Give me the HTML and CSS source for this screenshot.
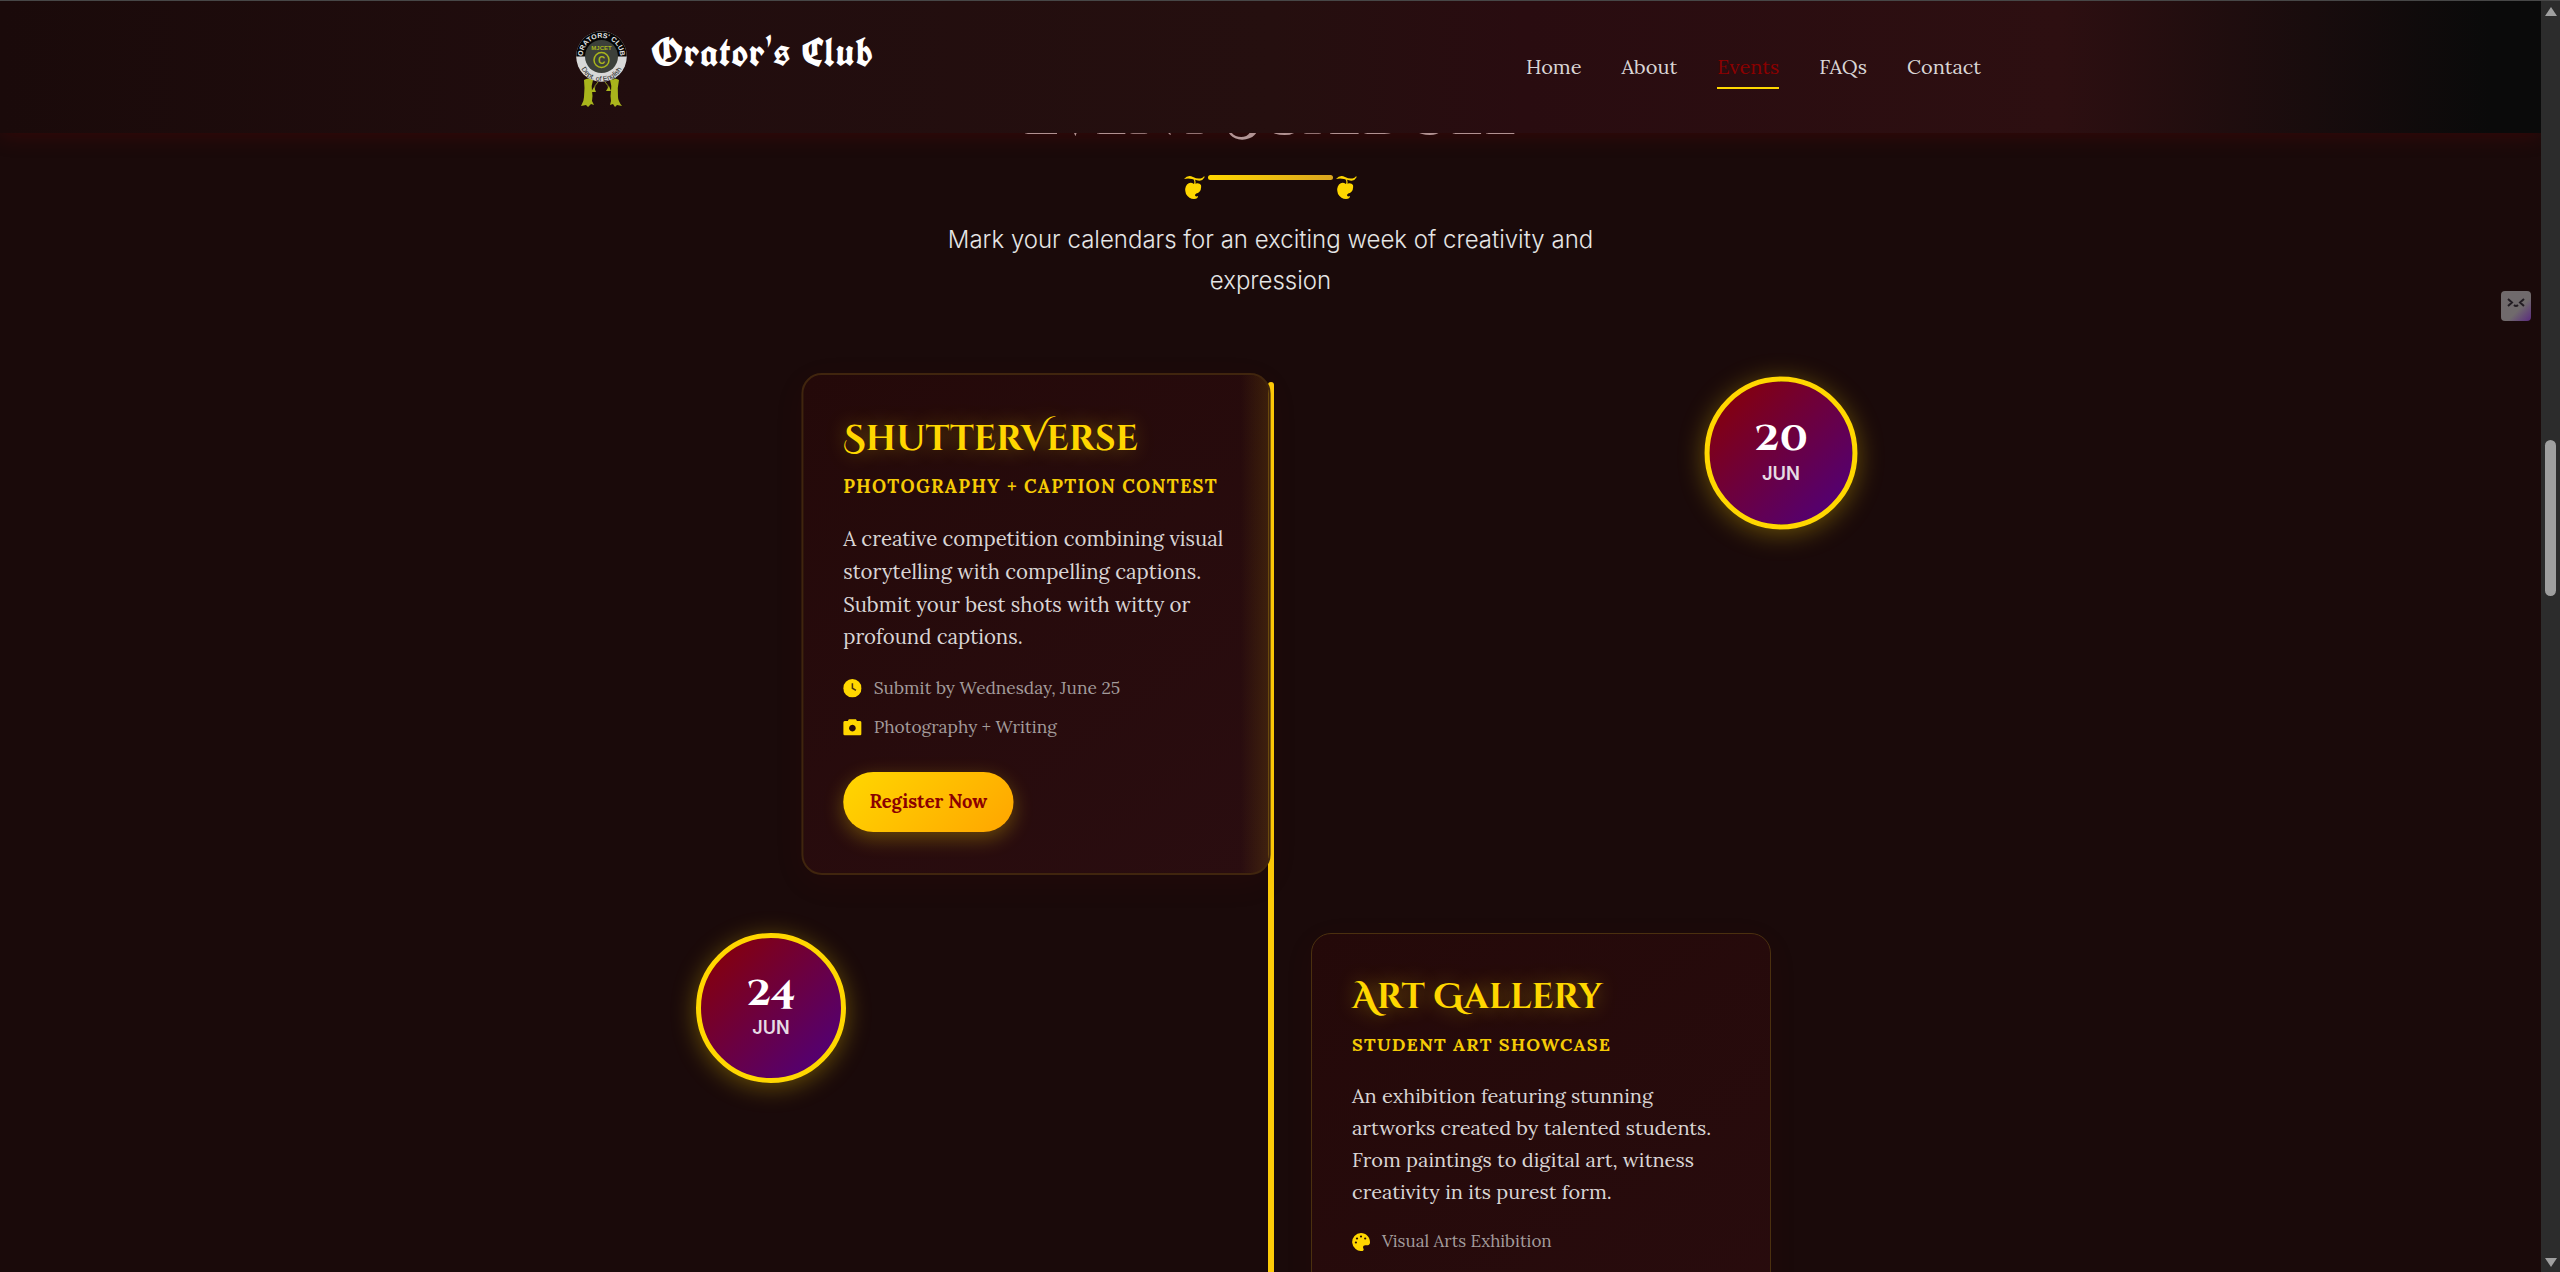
FILE: index.html
```html
<!DOCTYPE html>
<html lang="en">
<head>
<meta charset="utf-8">
<title>Orator's Club</title>
<link rel="stylesheet" href="styles.css">
</head>
<body>
<div class="page">
  <header class="header">
    <div class="brand">
      <svg class="logo" viewBox="0 0 51 76">
        <defs>
          <path id="arcTop" d="M6.800 25.500a18.700 18.700 0 0 1 37.400 0"/>
          <path id="arcBottom" d="M2.800 27.500a22.700 22.700 0 0 0 45.400 0"/>
        </defs>
        <path d="M8 49q4-3 9 0-2 6-1 11t0 10l2 4-3-1-3 3-2-2-5 1q3-5 3-9 1-9 0-17zM43 49q-4-3-9 0 2 6 1 11t0 10l-1 4 3-1 2 3 2-2 5 1q-4-5-4-9-1-9 1-17z" fill="#a9b51c"/>
        <path d="M22 51q-4 3-4 9M29 51q4 3 4 9" stroke="#8a9420" fill="none"/>
        <path d="M18 56l2 5h-5zM33 55l2 5h-5z" fill="#a9b51c"/>
        <circle cx="25.500" cy="25.500" r="25.300" fill="#d8d8d8"/>
        <path d="M.2 25.500a25.300 25.300 0 0 1 50.600 0z" fill="#050505"/>
        <circle cx="25.500" cy="25.500" r="16.500" fill="#3c403a"/>
        <circle cx="25.500" cy="29" r="7.500" fill="none" stroke="#a9b51c" stroke-width="1.500"/>
        <text x="25.500" y="32.700" class="logo-c">C</text>
        <text x="25.500" y="18.500" class="logo-mid">MJCET</text>
        <text class="logo-top"><textPath href="#arcTop" startOffset="50%">ORATORS' CLUB</textPath></text>
        <text class="logo-bottom"><textPath href="#arcBottom" startOffset="50%">Dept. of English</textPath></text>
      </svg>
      <span class="brand-name">Orator's Club</span>
    </div>
    <nav class="nav">
      <a class="nav-link">Home</a>
      <a class="nav-link">About</a>
      <a class="nav-link active">Events</a>
      <a class="nav-link">FAQs</a>
      <a class="nav-link">Contact</a>
    </nav>
  </header>

  <main class="main">
    <h1 class="heading">Event Schedule</h1>
    <div class="ornament">
      <svg class="leaf" viewBox="0 0 21 24"><path d="M0 4Q4-.5 9 2t9 1q2-1 2-2 1 1 0 2-2 4-8 2Q5 2.500 0 4z"/><path d="M10 4q2 3 0 7" class="stem"/><path d="M10 9Q6 6.500 3 9.500 0 13 2 19q3 5 8 5 4 0 4-3-2 1-3-.5 0-2 3-2.500 4-3 3-8Q15 7 10 9z"/></svg>
      <i class="rule"></i>
      <svg class="leaf" viewBox="0 0 21 24"><path d="M0 4Q4-.5 9 2t9 1q2-1 2-2 1 1 0 2-2 4-8 2Q5 2.500 0 4z"/><path d="M10 4q2 3 0 7" class="stem"/><path d="M10 9Q6 6.500 3 9.500 0 13 2 19q3 5 8 5 4 0 4-3-2 1-3-.5 0-2 3-2.500 4-3 3-8Q15 7 10 9z"/></svg>
    </div>
    <p class="lead">Mark your calendars for an exciting week of creativity and<br>expression</p>

    <section class="timeline">
      <div class="line"></div>
      <div class="row row-first">
        <article class="card hovered">
          <h2 class="title">ShutterVerse</h2>
          <h3 class="kind">PHOTOGRAPHY + CAPTION CONTEST</h3>
          <p class="text">A creative competition combining visual<br>storytelling with compelling captions.<br>Submit your best shots with witty or<br>profound captions.</p>
          <ul class="meta">
            <li><svg viewBox="0 0 18 18"><circle cx="9" cy="9" r="9"/><path d="M9 4v5l3.500 2" class="hands"/></svg><span>Submit by Wednesday, June 25</span></li>
            <li><svg viewBox="0 0 18 18"><path fill-rule="evenodd" d="M1.500 3H4.500L5.500 1.500h7l1 1.500h3Q18 3 18 4.500V15.500Q18 17 16.500 17h-15Q0 17 0 15.500V4.500Q0 3 1.500 3zM9 6.800a3.300 3.300 0 1 0 .01 0z"/></svg><span>Photography + Writing</span></li>
          </ul>
          <a class="button">Register Now</a>
        </article>
        <div class="date zoomed"><b>20</b><span>JUN</span></div>
      </div>
      <div class="row row-second">
        <div class="date"><b>24</b><span>JUN</span></div>
        <article class="card">
          <h2 class="title">Art Gallery</h2>
          <h3 class="kind">STUDENT ART SHOWCASE</h3>
          <p class="text">An exhibition featuring stunning<br>artworks created by talented students.<br>From paintings to digital art, witness<br>creativity in its purest form.</p>
          <ul class="meta">
            <li><svg viewBox="0 0 18 18"><path d="M9 0a9 9 0 1 0 1.500 17.900c1.500-.3 1.300-1.700.8-2.700-.7-1.600.2-3 2-3h2.400c1.500 0 2.300-1.400 2.300-3C18 4 14 0 9 0z"/><g class="dots"><circle cx="3.900" cy="9.500" r="1.100"/><circle cx="5" cy="5.500" r="1.100"/><circle cx="9" cy="3.500" r="1.100"/><circle cx="13.200" cy="5.500" r="1.100"/></g></svg><span>Visual Arts Exhibition</span></li>
          </ul>
        </article>
      </div>
    </section>
  </main>
</div>
<aside class="scrollbar"><i class="up"></i><i class="thumb"></i><i class="down"></i></aside>
<div class="widget"><svg viewBox="0 0 30 30"><path d="M7 8l4 3.500L7 15M23 8l-4 3.500 4 3.500M13 14q2 2 4 0"/></svg></div>
</body>
</html>
```
FILE: styles.css
```css
* { box-sizing: border-box; }
body {
  margin: 0;
  height: 1272px;
  overflow: hidden;
  display: flex;
  position: relative;
  background: #1a0a0a;
  color: #d9d5d5;
  font-family: Lora, "Liberation Serif", serif;
}
h1, h2, h3, p, ul { margin: 0; padding: 0; font-weight: normal; }
.page { width: 2541px; height: 1272px; overflow: hidden; }

.header {
  height: 133px;
  border-top: 1px solid #474747;
  padding: 30px 560px 0 576px;
  display: flex;
  justify-content: space-between;
  position: relative;
  z-index: 2;
  background: linear-gradient(90deg, #1a0a0a 0%, #210d0e 25%, #250f0f 50%, #290c10 60%, #2d0f11 81%, #0a0a0a 98%);
  box-shadow: 0 2px 20px rgba(139, 0, 0, .25);
}
.brand { display: flex; gap: 24px; }
.logo { width: 51px; height: 76px; }
.logo text { text-anchor: middle; font-family: "Liberation Sans", sans-serif; font-weight: bold; }
.logo .logo-c { font-size: 10px; fill: #a9b51c; }
.logo .logo-mid { font-size: 6px; fill: #a9b51c; }
.logo .logo-top { font-size: 7px; fill: #e4e4e4; }
.logo .logo-bottom { font-size: 7px; fill: #222; font-weight: normal; }
.brand-name { font: bold 40px/48px UnifrakturCook, UnifrakturMaguntia, "Pirata One", Lora, serif; margin-top: -3px; color: #fff; white-space: nowrap; letter-spacing: .8px; }
.nav { display: flex; gap: 40px; padding-top: 24px; }
.nav-link { font-size: 20px; line-height: 24px; height: 34px; white-space: nowrap; }
.active { color: #8b0000; border-bottom: 2px solid #ffd700; }

.main { display: flex; flex-direction: column; align-items: center; }
.heading { height: 42px; line-height: 64px; margin-top: -47px; margin-bottom: 47px; font-family: "Cinzel Decorative", Cinzel, Lora, serif; font-size: 54.400px; font-weight: bold; color: #b8a8a8; white-space: nowrap; }
.ornament { display: flex; gap: 3px; height: 30px; }
.leaf { width: 21px; height: 24px; margin-top: 0; fill: #ffd700; }
.stem { fill: none; stroke: #ffd700; stroke-width: 1.200; }
.rule { width: 125px; height: 5px; border-radius: 3px; background: linear-gradient(90deg, #ffd700, #daa520); }
.lead { margin-top: 14px; font: 300 24px/41px Inter, sans-serif; color: #e5e5e5; text-align: center; white-space: nowrap; }

.timeline { width: 1161px; height: 820px; margin-top: 76.600px; display: flex; flex-direction: column; gap: 63.400px; position: relative; }
.line { position: absolute; left: 578px; top: 4px; width: 6px; height: 1000px; background: #fdcb08; border-radius: 3px; }
.row { display: flex; align-items: flex-start; }
.row-first { padding-left: 116px; gap: 440px; }
.row-second { padding-left: 6px; gap: 465px; }
.card {
  position: relative;
  width: 460px;
  height: 492.600px;
  flex-shrink: 0;
  border: 1px solid #4b300f;
  border-radius: 20px;
  padding: 40px;
  background: linear-gradient(145deg, #240909, #290c0e);
  box-shadow: 0 8px 32px rgba(139, 0, 0, .06);
}
.hovered { height: 492px; transform: scale(1.02); border: 2px solid #40250e; padding: 39px; background: linear-gradient(90deg, transparent 94%, rgba(255, 215, 0, .1)), linear-gradient(145deg, #240909, #2a0d10); }
.title { height: 46px; margin-bottom: 10px; font-family: "Cinzel Decorative", Cinzel, Lora, serif; font-size: 35px; line-height: 48px; font-weight: bold; color: #ffd700; text-shadow: 0 0 20px rgba(255, 215, 0, .4); white-space: nowrap; }
.kind { font-size: 18px; line-height: 29px; margin-bottom: 21px; font-weight: 700; letter-spacing: 1.230px; color: #f5cb05; white-space: nowrap; }
.text { font-size: 20px; line-height: 32px; margin-bottom: 20.500px; white-space: nowrap; }
.meta { list-style: none; display: flex; flex-direction: column; gap: 11px; color: #a39b9b; font-size: 17px; line-height: 27.200px; white-space: nowrap; }
.meta li { display: flex; align-items: center; gap: 12px; }
.meta svg { width: 18px; height: 18px; flex-shrink: 0; fill: #ffd700; }
.dots { fill: #260a0b; }
.hands { fill: none; stroke: #4b300f; stroke-width: 1.500; }
.button {
  display: flex;
  align-items: center;
  justify-content: center;
  width: 166.700px;
  height: 58.800px;
  margin-top: 30.500px;
  padding-bottom: 2px;
  border-radius: 30px;
  font-size: 18px;
  font-weight: 700;
  color: #8b0000;
  background: linear-gradient(135deg, #ffd700, #ffa500);
  box-shadow: 0 6px 20px rgba(255, 215, 0, .3);
}
.date {
  width: 150px;
  height: 150px;
  flex-shrink: 0;
  display: flex;
  flex-direction: column;
  align-items: center;
  padding-top: 33px;
  border: 5px solid #ffd700;
  border-radius: 50%;
  background: linear-gradient(135deg, #8b0000, #4b0082);
  box-shadow: 0 4px 25px rgba(255, 215, 0, .35);
  color: #fff;
}
.zoomed { transform: scale(1.02); }
.date b { font: bold 40px/44px "Cinzel Decorative", "Playfair Display", Lora, serif; }
.date span { font: 600 18px/24px Inter, sans-serif; color: #e6dbe4; margin-top: 1px; }

.scrollbar { width: 19px; height: 1272px; background: #2c2c2c; border-top: 1px solid #474747; display: flex; flex-direction: column; align-items: center; padding: 6px 0 5px; }
.up { border: 6px solid transparent; border-top: 0; border-bottom: 9px solid #9f9f9f; }
.down { border: 6px solid transparent; border-bottom: 0; border-top: 9px solid #9f9f9f; margin-top: auto; }
.thumb { width: 11px; height: 156px; margin-top: 424px; border-radius: 6px; background: #9f9f9f; }
.widget { position: absolute; left: 2501px; top: 291px; width: 30px; height: 30px; border-radius: 4px; background: linear-gradient(135deg, #706a6c 60%, #5a2a80); }
.widget svg { display: block; fill: none; stroke: #221c22; stroke-width: 2; }
```
